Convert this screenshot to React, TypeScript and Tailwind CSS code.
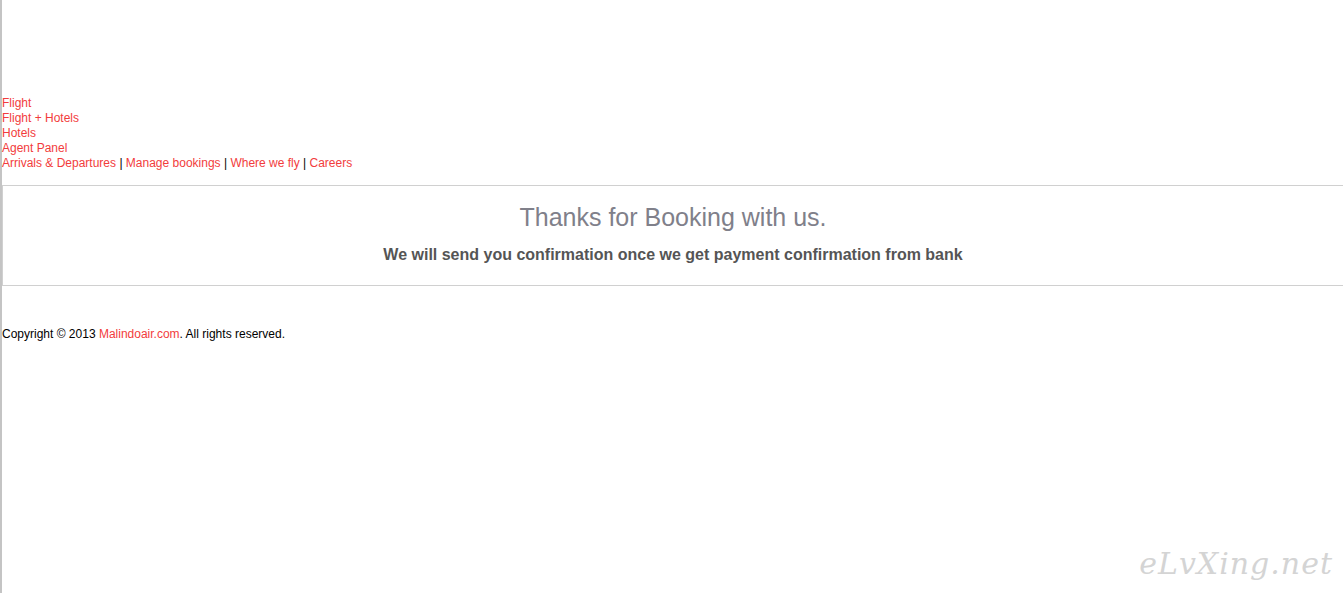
const NAV = ["Flight", "Flight + Hotels", "Hotels", "Agent Panel"] as const;

const SUB_LINKS = [
  "Arrivals & Departures",
  "Manage bookings",
  "Where we fly",
  "Careers",
] as const;

export default function App() {
  return (
    <div className="relative min-h-[593px] border-l-2 border-[#c4c4c4] bg-white font-['Liberation_Sans',Arial,sans-serif] text-[12px] leading-[15px] text-black">
      <div className="pt-[96px]">
        {NAV.map((item) => (
          <div key={item}>
            <a href="#" className="text-[#f23c3c]">
              {item}
            </a>
          </div>
        ))}
        <div>
          {SUB_LINKS.map((item, index) => (
            <span key={item}>
              <a href="#" className="text-[#f23c3c]">
                {item}
              </a>
              {index < SUB_LINKS.length - 1 ? " | " : null}
            </span>
          ))}
        </div>
      </div>

      <div className="mt-[14px] border-y border-l border-[#d0d0d0] pt-[17px] pb-[21px] text-center">
        <h1 className="text-[25px] leading-[28px] text-[#80808a]">Thanks for Booking with us.</h1>
        <p className="mt-[14px] text-[16px] leading-[19px] font-bold text-[#555555]">
          We will send you confirmation once we get payment confirmation from bank
        </p>
      </div>

      <div className="mt-[41px]">
        Copyright © 2013{" "}
        <a href="#" className="text-[#f23c3c]">
          Malindoair.com
        </a>
        . All rights reserved.
      </div>

      <div className="absolute right-[10px] bottom-[12px] font-['DejaVu_Serif',serif] text-[30px] leading-[34px] italic tracking-[1px] text-[#d4d4d4] select-none">
        eLvXing.net
      </div>
    </div>
  );
}
